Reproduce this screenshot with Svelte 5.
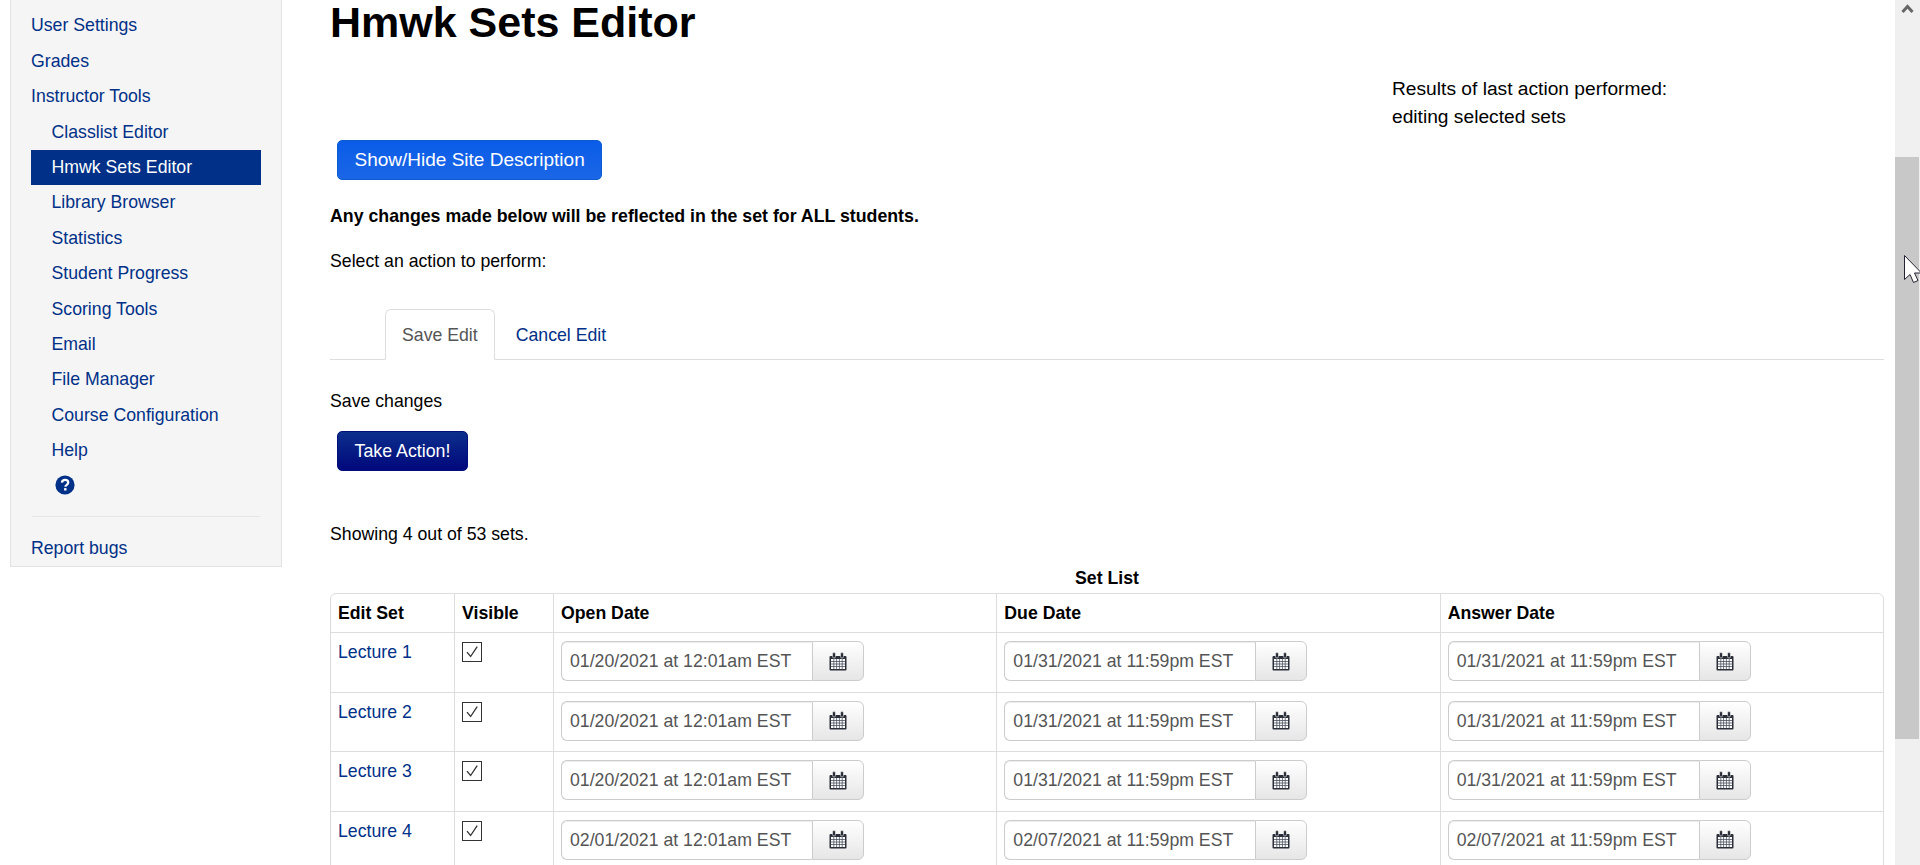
<script lang="ts">
  const topLinks = ["User Settings", "Grades", "Instructor Tools"];
  const subLinks = [
    "Classlist Editor",
    "Hmwk Sets Editor",
    "Library Browser",
    "Statistics",
    "Student Progress",
    "Scoring Tools",
    "Email",
    "File Manager",
    "Course Configuration",
    "Help",
  ];
  const sets = [
    { name: "Lecture 1", open: "01/20/2021", due: "01/31/2021", answer: "01/31/2021" },
    { name: "Lecture 2", open: "01/20/2021", due: "01/31/2021", answer: "01/31/2021" },
    { name: "Lecture 3", open: "01/20/2021", due: "01/31/2021", answer: "01/31/2021" },
    { name: "Lecture 4", open: "02/01/2021", due: "02/07/2021", answer: "02/07/2021" },
  ];
</script>

{#snippet dateField(value: string)}
  <div class="date-field">
    <div class="date-input">{value}</div>
    <div class="date-btn">
      <svg width="18" height="19" viewBox="0 0 18 19">
        <path d="M1.5 4h15a1 1 0 0 1 1 1v12.5a1 1 0 0 1-1 1h-15a1 1 0 0 1-1-1V5a1 1 0 0 1 1-1z" fill="#2b2f3a" />
        <rect x="2" y="7" width="14" height="10" fill="#fff" />
        <path d="M2 9.5h14M2 12h14M2 14.5h14M4.8 7v10M7.6 7v10M10.4 7v10M13.2 7v10" stroke="#4a5060" stroke-width="0.8" fill="none" />
        <rect x="3.5" y="0.5" width="3" height="5.5" rx="1.4" fill="#2b2f3a" stroke="#f5f5f5" stroke-width="0.6" />
        <rect x="11.5" y="0.5" width="3" height="5.5" rx="1.4" fill="#2b2f3a" stroke="#f5f5f5" stroke-width="0.6" />
      </svg>
    </div>
  </div>
{/snippet}

<div class="page">
  <nav class="sidebar">
    {#each topLinks as link}
      <a class="nav-link" href="#top">{link}</a>
    {/each}
    {#each subLinks as link}
      <a class="nav-link sub" class:active={link === "Hmwk Sets Editor"} href="#top">{link}</a>
    {/each}
    <div class="help-icon">
      <svg width="20" height="20" viewBox="0 0 20 20">
        <circle cx="10" cy="10" r="9.6" fill="#003087" />
        <path d="M6.9 7.6c.2-1.8 1.5-2.7 3.2-2.7 1.8 0 3.1 1.1 3.1 2.6 0 2.3-2.8 2.4-2.8 4.3" fill="none" stroke="#fff" stroke-width="2.3" />
        <rect x="9.1" y="13.1" width="2.4" height="2.4" fill="#fff" />
      </svg>
    </div>
    <hr />
    <a class="nav-link" href="#top">Report bugs</a>
  </nav>

  <main class="content">
    <h1>Hmwk Sets Editor</h1>
    <div class="results">
      <div>Results of last action performed:</div>
      <div>editing selected sets</div>
    </div>
    <button class="btn btn-blue">Show/Hide Site Description</button>
    <p class="warning">Any changes made below will be reflected in the set for ALL students.</p>
    <p class="select-action">Select an action to perform:</p>

    <div class="tabs">
      <span class="tab current">Save Edit</span>
      <span class="tab">Cancel Edit</span>
    </div>

    <p class="save-note">Save changes</p>
    <button class="btn btn-navy">Take Action!</button>
    <p class="showing">Showing 4 out of 53 sets.</p>

    <table>
      <caption>Set List</caption>
      <thead>
        <tr>
          <th class="col-set">Edit Set</th>
          <th class="col-visible">Visible</th>
          <th>Open Date</th>
          <th>Due Date</th>
          <th>Answer Date</th>
        </tr>
      </thead>
      <tbody>
        {#each sets as set}
          <tr>
            <td class="set-name"><a href="#top">{set.name}</a></td>
            <td>
              <span class="check">
                <svg width="18" height="18" viewBox="0 0 18 18">
                  <path d="M4 9.2l3.6 4.3L14.2 3.6" fill="none" stroke="#333" stroke-width="1.3" />
                </svg>
              </span>
            </td>
            <td>{@render dateField(`${set.open} at 12:01am EST`)}</td>
            <td>{@render dateField(`${set.due} at 11:59pm EST`)}</td>
            <td>{@render dateField(`${set.answer} at 11:59pm EST`)}</td>
          </tr>
        {/each}
      </tbody>
    </table>
  </main>

  <div class="scrollbar">
    <svg class="arrow-up" width="13" height="11" viewBox="0 0 13 11">
      <path d="M1.5 9L6.5 3.5L11.5 9" fill="none" stroke="#666" stroke-width="3" />
    </svg>
    <div class="thumb"></div>
    <svg class="cursor" width="18" height="28" viewBox="0 0 18 28">
      <path d="M0.5 0.5V24.5L6 19.5L9.5 27.5L14 25.5L10.5 18H17.5z" fill="#fff" stroke="#223" stroke-width="1" />
    </svg>
  </div>
</div>

<style>
  :global(body) {
    margin: 0;
    background: #fff;
  }

  .page {
    display: flex;
    height: 865px;
    overflow: hidden;
    font-family: "Liberation Sans", Arial, sans-serif;
    font-size: 17.7px;
    line-height: 35.4px;
    color: #000;
  }

  a {
    color: #003087;
    text-decoration: none;
  }

  .sidebar {
    flex: none;
    width: 272px;
    height: 567px;
    box-sizing: border-box;
    margin-left: 10px;
    padding: 8.4px 20px 0;
    background: #f5f5f5;
    border: 1px solid #e3e3e3;
    border-top: none;
  }

  .nav-link {
    display: block;
    height: 35.4px;
    white-space: nowrap;
  }

  .nav-link.sub {
    padding-left: 20.5px;
  }

  .nav-link.active {
    background: #003087;
    color: #fff;
  }

  .help-icon {
    height: 32.4px;
    padding-left: 24px;
    display: flex;
    align-items: center;
  }

  hr {
    border: none;
    border-top: 1px solid #e5e5e5;
    margin: 15px 1px 14.3px;
  }

  .content {
    flex: none;
    width: 1554px;
    margin-left: 48px;
  }

  h1 {
    margin: 0;
    font-size: 43px;
    line-height: 44px;
    font-weight: bold;
  }

  .results {
    margin: 30.5px 0 0 1062px;
    font-size: 19.2px;
    line-height: 28px;
  }

  .btn {
    display: block;
    height: 40px;
    box-sizing: border-box;
    margin-left: 7px;
    padding: 0 16.5px;
    border: 1px solid transparent;
    border-radius: 5px;
    font-family: inherit;
    color: #fff;
  }

  .btn-blue {
    margin-top: 9.5px;
    font-size: 19px;
    background: linear-gradient(#0a5ce8, #1b66e6);
    border-color: #0d5ccf;
  }

  .btn-navy {
    margin-top: 11.6px;
    font-size: 17.8px;
    background: linear-gradient(#0c2f8c, #00087c);
    border-color: #00107a;
  }

  p {
    margin: 0;
  }

  .warning {
    margin-top: 18.6px;
    font-size: 17.76px;
    font-weight: bold;
  }

  .select-action {
    margin-top: 9.6px;
  }

  .tabs {
    display: flex;
    height: 51px;
    box-sizing: border-box;
    margin-top: 30.4px;
    padding-left: 55px;
    border-bottom: 1px solid #ddd;
  }

  .tab {
    height: 51px;
    box-sizing: border-box;
    padding: 6px 17px 0;
    color: #003087;
    border: 1px solid transparent;
    line-height: 38px;
  }

  .tab.current {
    padding: 6px 16px 0;
    margin-right: 3px;
    color: #555;
    background: #fff;
    border-color: #ddd;
    border-bottom-color: #fff;
    border-radius: 6px 6px 0 0;
  }

  .save-note {
    margin-top: 24px;
  }

  .showing {
    margin-top: 46px;
  }

  table {
    width: 100%;
    margin-top: 13.3px;
    border-collapse: separate;
    border-spacing: 0;
    table-layout: fixed;
    border: 1px solid #ddd;
    border-radius: 6px;
    line-height: 21px;
  }

  caption {
    font-weight: bold;
    padding-bottom: 2px;
    line-height: 25px;
  }

  th,
  td {
    box-sizing: border-box;
    padding: 8px 7px;
    text-align: left;
    vertical-align: top;
    border-left: 1px solid #ddd;
  }

  th:first-child,
  td:first-child {
    border-left: none;
  }

  td {
    height: 59.5px;
    border-top: 1px solid #ddd;
  }

  th {
    height: 38px;
    padding-top: 9px;
    padding-bottom: 7px;
  }

  td.set-name {
    padding-top: 9px;
  }

  .col-set {
    width: 123px;
  }

  .col-visible {
    width: 99px;
  }

  .check {
    display: block;
    width: 20px;
    height: 20px;
    box-sizing: border-box;
    margin-top: 1px;
    border: 1px solid #333;
    background: #fff;
  }

  .check svg {
    display: block;
  }

  .date-field {
    display: flex;
    width: 303px;
    height: 40px;
  }

  .date-input {
    flex: none;
    width: 251px;
    box-sizing: border-box;
    padding: 0 8px;
    line-height: 38px;
    color: #555;
    background: #fff;
    border: 1px solid #ccc;
    border-right: none;
    border-radius: 6px 0 0 6px;
    box-shadow: inset 0 1px 1px rgba(0, 0, 0, 0.075);
  }

  .date-btn {
    flex: 1;
    display: flex;
    align-items: center;
    justify-content: center;
    background: linear-gradient(#fff, #e6e6e6);
    border: 1px solid #ccc;
    border-radius: 0 6px 6px 0;
  }

  .scrollbar {
    position: absolute;
    top: 0;
    right: 0;
    width: 25px;
    height: 865px;
    background: #f0f0f0;
  }

  .arrow-up {
    position: absolute;
    left: 6px;
    top: 3px;
  }

  .thumb {
    position: absolute;
    left: 0;
    top: 157px;
    width: 24px;
    height: 582px;
    background: #c8c8c8;
  }

  .cursor {
    position: absolute;
    left: 9px;
    top: 255px;
  }
</style>
